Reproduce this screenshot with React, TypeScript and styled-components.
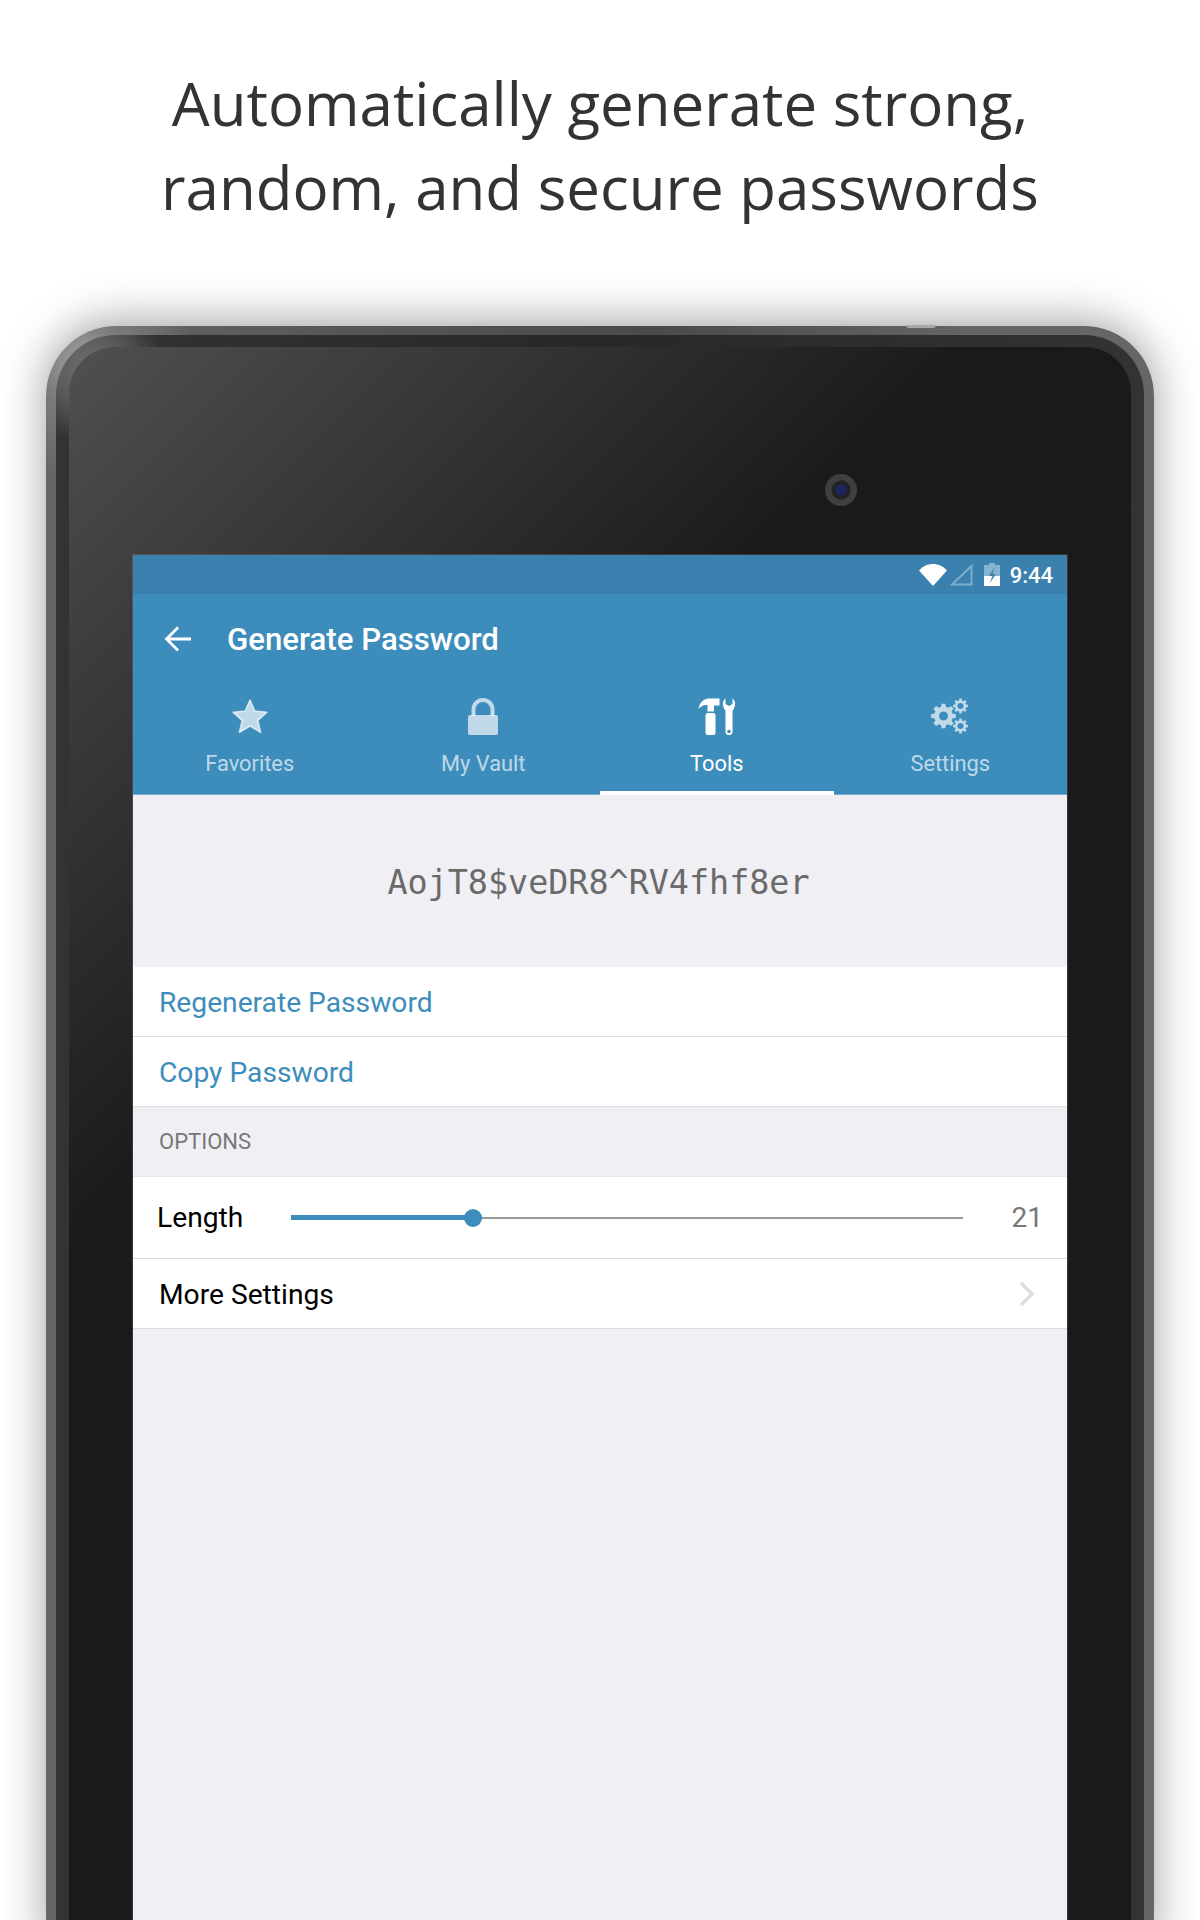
import { ReactNode } from 'react';
import styled, { createGlobalStyle } from 'styled-components';

const GlobalStyle = createGlobalStyle`
  html, body {
    margin: 0;
    height: 1920px;
    overflow: hidden;
    background: #fff;
  }
  * { box-sizing: border-box; }
`;

const Page = styled.div`
  width: 1200px;
  height: 1920px;
  overflow: hidden;
  background: #fff;
`;

const Headline = styled.h1`
  margin: 0;
  padding: 61px 0 97px;
  height: 326px;
  text-align: center;
  font-family: 'Open Sans', sans-serif;
  font-weight: 400;
  font-size: 60px;
  line-height: 84px;
  color: #333;
`;

const DeviceShell = styled.div`
  position: relative;
  width: 1108px;
  margin: 0 auto;
  padding: 9px 10px 0;
  border-radius: 70px 70px 0 0;
  background:
    radial-gradient(circle at 40px 40px, #a8a8a8 0, #7a7a7a 45px, rgba(102, 102, 102, 0) 110px),
    linear-gradient(90deg, #666 0, #555 30%, #4a4a4a 55%, #666 85%);
  box-shadow: 0 -4px 45px rgba(0, 0, 0, 0.38);
`;

const PowerButton = styled.div`
  position: absolute;
  top: -1px;
  left: 860px;
  width: 30px;
  height: 3px;
  border-radius: 0 0 12px 12px;
  background: #a8a8a8;
`;

const DeviceRim = styled.div`
  padding: 12px 13px 0;
  border-radius: 60px 60px 0 0;
  background:
    radial-gradient(circle at 32px 32px, #6e6e6e 0, #5a5a5a 35px, rgba(51, 51, 51, 0) 75px),
    linear-gradient(90deg, #333 0, #282828 50%, #333 100%);
`;

const Bezel = styled.div`
  position: relative;
  padding: 208px 64px 0;
  height: 1600px;
  border-radius: 46px 46px 0 0;
  background: linear-gradient(135deg, #505050 0, #1a1a1a 640px);
`;

const Camera = styled.div`
  position: absolute;
  top: 127px;
  left: 756px;
  width: 32px;
  height: 32px;
  border-radius: 50%;
  background: radial-gradient(circle, #1c2560 0, #1c2560 5px, #222 6px, #222 9px, #3f3f3f 10px);
`;

const Screen = styled.div`
  height: 1392px;
  background: #efeff4;
  box-shadow: 0 0 0 1px rgba(255, 255, 255, 0.12);
  font-family: Roboto, sans-serif;
`;

const StatusBar = styled.div`
  height: 39px;
  padding: 8px 14px 0 0;
  display: flex;
  align-items: flex-start;
  justify-content: flex-end;
  background: #3a81af;
`;

const WifiIcon = styled.svg`
  width: 28px;
  height: 22px;
  margin-top: 1px;
`;

const SignalIcon = styled.svg`
  width: 23px;
  height: 22px;
  margin: 1px 0 0 3px;
`;

const BatteryIcon = styled.svg`
  width: 16px;
  height: 23px;
  margin: 0 10px 0 11px;
`;

const Clock = styled.span`
  margin-top: 1px;
  color: #fff;
  font-size: 22px;
  font-weight: 500;
  line-height: 24px;
`;

const Toolbar = styled.div`
  height: 90px;
  padding-left: 31px;
  display: flex;
  align-items: center;
  background: #3c8dbc;
`;

const BackIcon = styled.svg`
  width: 28px;
  height: 28px;
`;

const ToolbarTitle = styled.div`
  margin-left: 35px;
  color: #fff;
  font-size: 31.2px;
  font-weight: 500;
`;

const TabBar = styled.div`
  height: 111px;
  display: flex;
  background: #3c8dbc;
`;

const Tab = styled.div<{ $active?: boolean }>`
  flex: 1;
  display: flex;
  flex-direction: column;
  align-items: center;
  padding-top: 14px;
  color: ${({ $active }) => ($active ? '#fff' : 'rgba(255, 255, 255, 0.68)')};
  border-bottom: ${({ $active }) => ($active ? '4px solid #fff' : '1px solid #74add0')};
`;

const TabIcon = styled.svg`
  width: 38px;
  height: 38px;
`;

const TabLabel = styled.span`
  margin-top: 15px;
  font-size: 21.8px;
  line-height: 25px;
`;

const PasswordPanel = styled.div`
  height: 172px;
  padding: 3px 3px 0 0;
  display: flex;
  align-items: center;
  justify-content: center;
  font-family: 'DejaVu Sans Mono', monospace;
  font-size: 33.4px;
  color: #6a6a6a;
`;

const Row = styled.div<{ $tall?: boolean }>`
  height: ${({ $tall }) => ($tall ? '82px' : '70px')};
  padding: ${({ $tall }) => ($tall ? '0' : '1px')} 24px 0 26px;
  display: flex;
  align-items: center;
  background: #fff;
  border-bottom: 1px solid #dcdce3;
  font-size: 28.2px;
`;

const ActionText = styled.span`
  color: #3c8dbc;
`;

const SectionHeader = styled.div`
  height: 70px;
  padding: 0 26px;
  display: flex;
  align-items: center;
  border-bottom: 1px solid #e6e6ec;
  color: #777;
  font-size: 22px;
`;

const LengthLabel = styled.span`
  margin-left: -2px;
  width: 134px;
  color: #000;
`;

const Slider = styled.div`
  position: relative;
  width: 672px;
  height: 2px;
  background: #999;
`;

const SliderFill = styled.div`
  position: absolute;
  left: 0;
  top: -2px;
  height: 5px;
  background: #3c8dbc;
`;

const SliderThumb = styled.div`
  position: absolute;
  top: -8px;
  width: 18px;
  height: 18px;
  margin-left: -9px;
  border-radius: 50%;
  background: #3c8dbc;
`;

const LengthValue = styled.span`
  margin-left: auto;
  color: #777;
  font-size: 28px;
`;

const SettingsText = styled.span`
  color: #000;
`;

const Chevron = styled.svg`
  margin-left: auto;
  margin-right: 8px;
  width: 16px;
  height: 26px;
`;

function gearPath(cx: number, cy: number, outer: number, inner: number, hole: number, teeth: number) {
  const step = (Math.PI * 2) / teeth;
  const pts: string[] = [];
  for (let i = 0; i < teeth; i++) {
    const a = i * step;
    const corners: [number, number][] = [
      [inner, a - step * 0.32],
      [outer, a - step * 0.2],
      [outer, a + step * 0.2],
      [inner, a + step * 0.32],
    ];
    corners.forEach(([r, t]) => {
      pts.push(`${(cx + r * Math.cos(t)).toFixed(2)} ${(cy + r * Math.sin(t)).toFixed(2)}`);
    });
  }
  const ring = `M${pts.join('L')}Z`;
  const circle = `M${cx - hole} ${cy}a${hole} ${hole} 0 1 0 ${hole * 2} 0a${hole} ${hole} 0 1 0 ${-hole * 2} 0Z`;
  return ring + circle;
}

const tabs: { label: string; active?: boolean; icon: ReactNode }[] = [
  {
    label: 'Favorites',
    icon: (
      <polygon
        points="19,2 23.8,13 36,14.2 26.8,22.4 29.6,34.4 19,28 8.4,34.4 11.2,22.4 2,14.2 14.2,13"
        fill="currentColor"
        stroke="currentColor"
        strokeWidth="1.6"
        strokeLinejoin="round"
      />
    ),
  },
  {
    label: 'My Vault',
    icon: (
      <>
        <rect x="4" y="17" width="30" height="20" rx="2" fill="currentColor" />
        <path d="M9.5 18v-6.5a9.5 9.5 0 0 1 19 0V18" fill="none" stroke="currentColor" strokeWidth="4" />
      </>
    ),
  },
  {
    label: 'Tools',
    active: true,
    icon: (
      <g fill="currentColor">
        <path d="M0.5 11C1.5 5 5.5 0.5 11 0.5H21.5V7.5H16V13.5H9.5V7C6 6.5 3 8 0.5 11Z" />
        <rect x="7.5" y="15" width="10" height="22" rx="2.5" />
        <path
          fillRule="evenodd"
          d="M27.5 0.5V6L31 8L34.5 6V0.5C36.5 2 37.5 4.5 37 7C36.5 10 35.5 11.5 34.5 12.5V33.5A3.5 3.5 0 0 1 27.5 33.5V12.5C26.5 11.5 25.5 10 25 7C24.5 4.5 25.5 2 27.5 0.5ZM29.2 33.5A1.8 1.8 0 1 0 32.8 33.5A1.8 1.8 0 1 0 29.2 33.5Z"
        />
      </g>
    ),
  },
  {
    label: 'Settings',
    icon: (
      <g fill="currentColor" fillRule="evenodd">
        <path d={gearPath(12.5, 18, 12.5, 9.5, 4.5, 8)} />
        <path d={gearPath(29.5, 8, 7.5, 5.6, 3, 8)} />
        <path d={gearPath(29.5, 28, 7.5, 5.6, 3, 8)} />
      </g>
    ),
  },
];

const sliderValue = 182;

export default function App() {
  return (
    <Page>
      <GlobalStyle />
      <Headline>
        Automatically generate strong,
        <br />
        random, and secure passwords
      </Headline>
      <DeviceShell>
        <PowerButton />
        <DeviceRim>
          <Bezel>
            <Camera />
            <Screen>
              <StatusBar>
                <WifiIcon viewBox="0 0 28 22">
                  <path d="M14 22L0 6.5C4 2 9 0 14 0C19 0 24 2 28 6.5Z" fill="#fff" />
                </WifiIcon>
                <SignalIcon viewBox="0 0 23 22">
                  <path d="M2 20.5L21.5 2V20.5Z" fill="none" stroke="rgba(255,255,255,0.35)" strokeWidth="2" />
                </SignalIcon>
                <BatteryIcon viewBox="0 0 16 23">
                  <path d="M5 0H11V2H16V23H0V2H5Z" fill="rgba(255,255,255,0.4)" />
                  <path d="M0 13H16V23H0Z" fill="#fff" />
                  <path d="M10.5 4.5L5 13H8.5L5.5 20.5L12 11H8.5Z" fill="#3a81af" />
                </BatteryIcon>
                <Clock>9:44</Clock>
              </StatusBar>
              <Toolbar>
                <BackIcon viewBox="0 0 28 28">
                  <path d="M27 14H3M14 2.5L2.5 14L14 25.5" fill="none" stroke="#fff" strokeWidth="2.8" />
                </BackIcon>
                <ToolbarTitle>Generate Password</ToolbarTitle>
              </Toolbar>
              <TabBar>
                {tabs.map((tab) => (
                  <Tab key={tab.label} $active={tab.active}>
                    <TabIcon viewBox="0 0 38 38">{tab.icon}</TabIcon>
                    <TabLabel>{tab.label}</TabLabel>
                  </Tab>
                ))}
              </TabBar>
              <PasswordPanel>AojT8$veDR8^RV4fhf8er</PasswordPanel>
              <Row>
                <ActionText>Regenerate Password</ActionText>
              </Row>
              <Row>
                <ActionText>Copy Password</ActionText>
              </Row>
              <SectionHeader>OPTIONS</SectionHeader>
              <Row $tall>
                <LengthLabel>Length</LengthLabel>
                <Slider>
                  <SliderFill style={{ width: sliderValue }} />
                  <SliderThumb style={{ left: sliderValue }} />
                </Slider>
                <LengthValue>21</LengthValue>
              </Row>
              <Row>
                <SettingsText>More Settings</SettingsText>
                <Chevron viewBox="0 0 16 26">
                  <path d="M2 2L13 13L2 24" fill="none" stroke="#ddd" strokeWidth="3.5" />
                </Chevron>
              </Row>
            </Screen>
          </Bezel>
        </DeviceRim>
      </DeviceShell>
    </Page>
  );
}
